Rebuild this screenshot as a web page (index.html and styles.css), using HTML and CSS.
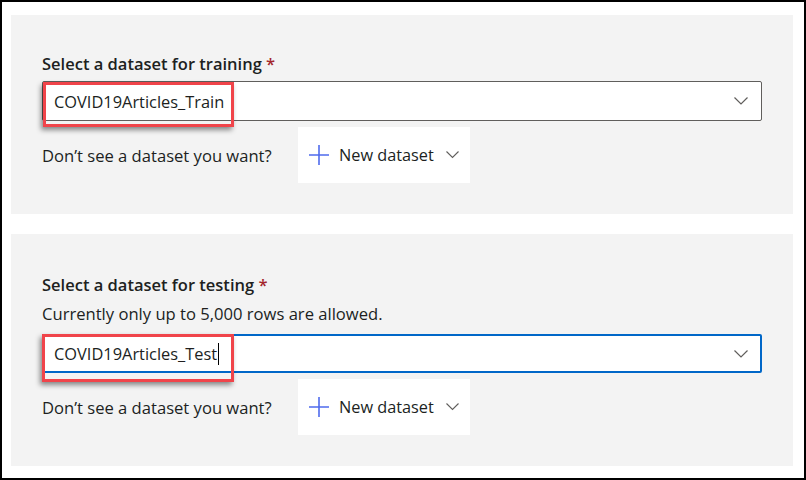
FILE: index.html
```html
<!DOCTYPE html>
<html>
<head>
<meta charset="utf-8">
<link rel="stylesheet" href="styles.css">
</head>
<body>
<div class="frame">
  <section class="panel panel-train">
    <div class="label">Select a dataset for training <span class="req">*</span></div>
    <div class="dropdown">
      <span class="value">COVID19Articles_Train</span>
      <svg class="chev" width="14" height="8" viewBox="0 0 14 8"><path d="M0.5 0.5 L7 7 L13.5 0.5" fill="none" stroke="#605e5c" stroke-width="1.2"/></svg>
      <div class="highlight"></div>
    </div>
    <div class="row">
      <span class="hint">Don’t see a dataset you want?</span>
      <div class="newbtn">
        <svg class="plus" width="20" height="20" viewBox="0 0 20 20"><path d="M10 0 V20 M0 10 H20" stroke="#4f6bed" stroke-width="1.6" fill="none"/></svg>
        <span class="btntext">New dataset</span>
        <svg class="bchev" width="13" height="8" viewBox="0 0 13 8"><path d="M0.5 0.5 L6.5 6.5 L12.5 0.5" fill="none" stroke="#605e5c" stroke-width="1.1"/></svg>
      </div>
    </div>
  </section>
  <section class="panel panel-test">
    <div class="label">Select a dataset for testing <span class="req">*</span></div>
    <div class="help">Currently only up to 5,000 rows are allowed.</div>
    <div class="dropdown focused">
      <span class="value">COVID19Articles_Test<span class="caret"></span></span>
      <svg class="chev" width="14" height="8" viewBox="0 0 14 8"><path d="M0.5 0.5 L7 7 L13.5 0.5" fill="none" stroke="#605e5c" stroke-width="1.2"/></svg>
      <div class="highlight h2"></div>
    </div>
    <div class="row">
      <span class="hint">Don’t see a dataset you want?</span>
      <div class="newbtn">
        <svg class="plus" width="20" height="20" viewBox="0 0 20 20"><path d="M10 0 V20 M0 10 H20" stroke="#4f6bed" stroke-width="1.6" fill="none"/></svg>
        <span class="btntext">New dataset</span>
        <svg class="bchev" width="13" height="8" viewBox="0 0 13 8"><path d="M0.5 0.5 L6.5 6.5 L12.5 0.5" fill="none" stroke="#605e5c" stroke-width="1.1"/></svg>
      </div>
    </div>
  </section>
</div>
</body>
</html>
```

FILE: styles.css
```css
html, body {
  margin: 0;
  padding: 0;
  background: #fff;
}
.frame {
  box-sizing: border-box;
  width: 806px;
  height: 480px;
  border: 2px solid #000;
  padding: 13px 11px 0 9px;
  display: flex;
  flex-direction: column;
  gap: 20px;
  font-family: "Open Sans", "Noto Sans", sans-serif;
  color: #201f1e;
}
.panel {
  background: #f3f3f3;
  padding: 36px 31px 31px 31px;
  display: flex;
  flex-direction: column;
}
.panel-train { height: 199px; box-sizing: border-box; }
.panel-test { height: 232px; box-sizing: border-box; padding-top: 38px; }
.label {
  font-size: 16.5px;
  font-weight: 600;
  line-height: 26px;
  height: 26px;
  margin-bottom: 4px;
}
.req { color: #a4262c; font-weight: 600; }
.help {
  font-size: 16.6px;
  line-height: 28px;
  margin-top: -2px;
  margin-bottom: 6px;
}
.dropdown {
  position: relative;
  box-sizing: border-box;
  width: 720px;
  height: 40px;
  background: #fff;
  border: 1px solid #605e5c;
  border-radius: 2px;
  display: flex;
  align-items: center;
  justify-content: space-between;
  padding: 0 13px 0 11px;
}
.dropdown.focused {
  border: 2px solid #0067c8;
  padding: 0 12px 0 10px;
}
.value {
  font-size: 16.4px;
  display: flex;
  align-items: center;
}
.caret {
  display: inline-block;
  width: 1px;
  height: 22px;
  background: #000;
  margin-left: 1px;
}
.highlight {
  position: absolute;
  left: 0;
  top: 0;
  width: 185px;
  height: 39px;
  border: 3px solid #f0444a;
  box-shadow: -2px 3px 5px rgba(0,0,0,0.45);
}
.highlight.h2 {
  left: -2px;
  top: -2px;
  width: 186px;
  height: 42px;
}
.row {
  display: flex;
  align-items: center;
  margin-top: 6px;
}
.hint {
  font-size: 16.6px;
  width: 256px;
}
.newbtn {
  box-sizing: border-box;
  width: 172px;
  height: 56px;
  background: #fff;
  display: flex;
  align-items: center;
  padding-left: 11px;
}
.plus { margin-right: 10px; }
.btntext { font-size: 16.3px; margin-right: 12px; }
```
